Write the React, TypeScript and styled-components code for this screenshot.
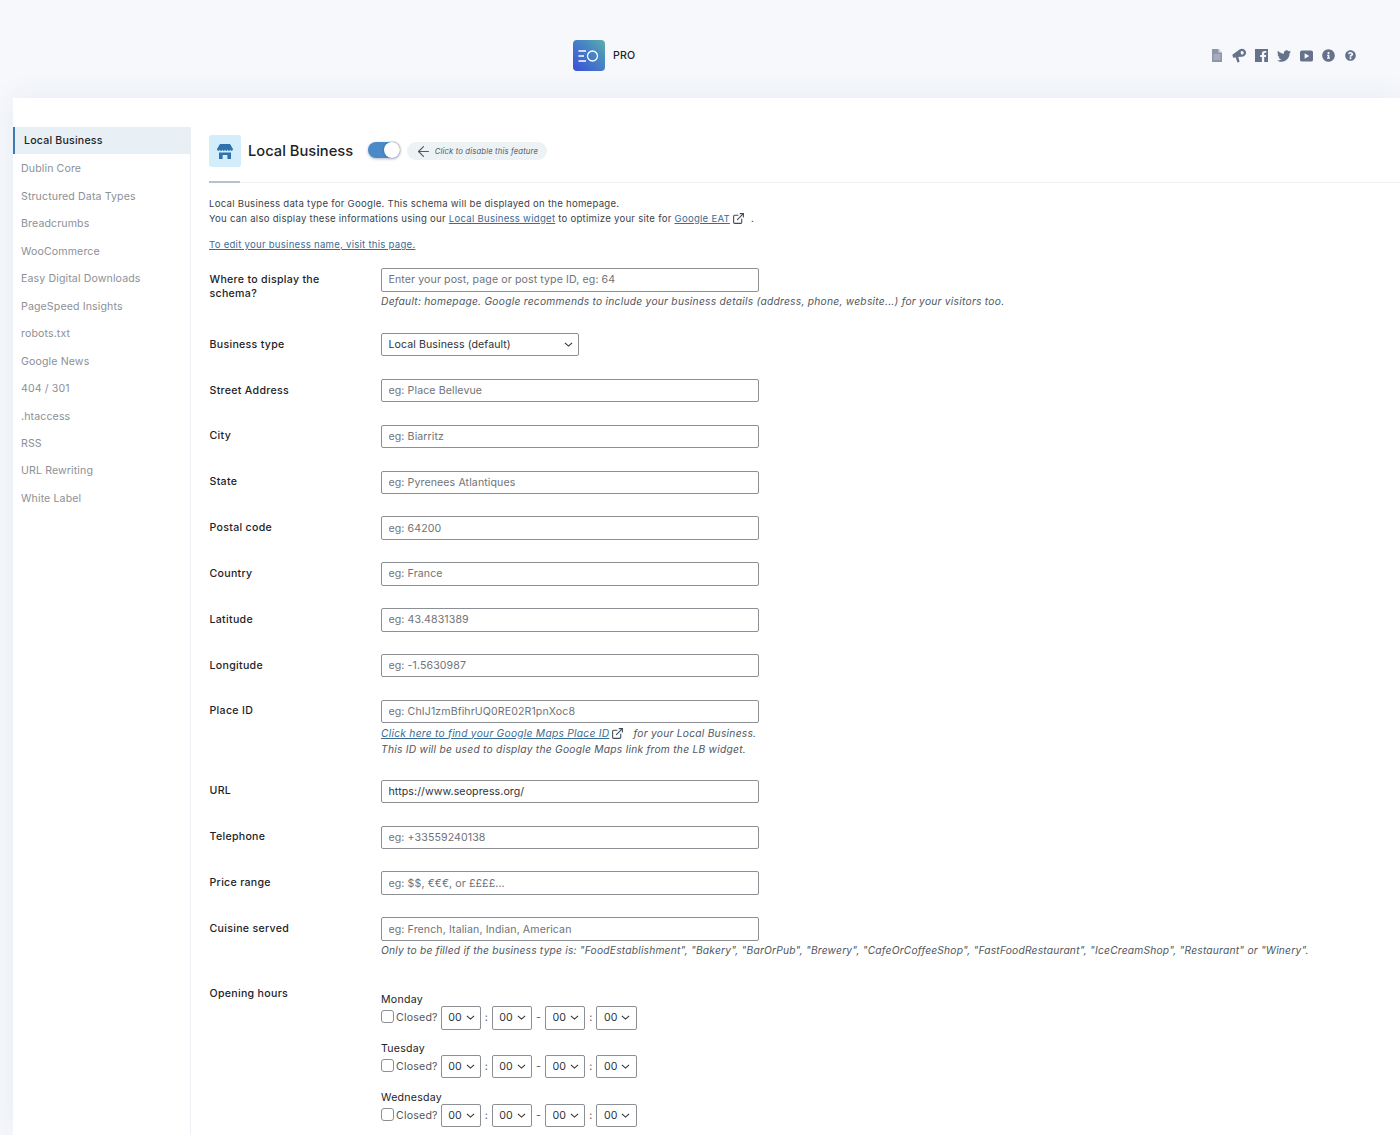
import React from "react";
import styled, { createGlobalStyle } from "styled-components";
import { ArrowLeft, ExternalLink } from "lucide-react";
import { FaTwitter, FaInfoCircle, FaQuestionCircle } from "react-icons/fa";

const chevron =
  "url(\"data:image/svg+xml,%3Csvg xmlns='http://www.w3.org/2000/svg' width='10' height='6' viewBox='0 0 10 6'%3E%3Cpath d='M1 1l4 4 4-4' fill='none' stroke='%23333' stroke-width='1.2'/%3E%3C/svg%3E\")";

const Global = createGlobalStyle`
  html, body { margin: 0; padding: 0; background: #f6f8fc; }
  body { font-family: Inter, "Liberation Sans", sans-serif; font-size: 10.6px; color: #3c434a; height: 1135px; overflow: hidden; }
  * { box-sizing: border-box; }
`;

const Page = styled.div`
  width: 1400px;
  height: 1135px;
  overflow: hidden;
`;

const Header = styled.header`
  height: 98px;
  position: relative;
  display: flex;
  align-items: center;
  justify-content: flex-end;
  padding: 13px 44px 0 0;
`;

const Brand = styled.div`
  position: absolute;
  left: 573px;
  top: 40px;
  display: flex;
  align-items: center;
  gap: 8px;
  font-size: 10.6px;
  font-weight: 500;
  color: #1d2327;
  letter-spacing: 0.2px;
`;

const Logo = styled.div`
  width: 32px;
  height: 31px;
  border-radius: 4px;
  background: linear-gradient(45deg, #3b4fd8 0%, #4b8fbf 70%, #5fb0a8 100%);
  display: flex;
  align-items: center;
  justify-content: center;
`;

const HeaderIcons = styled.nav`
  display: flex;
  align-items: center;
  gap: 9px;
  color: #66728c;
`;

const IconSlot = styled.span<{ $w: number }>`
  width: ${(p) => p.$w}px;
  display: flex;
  justify-content: center;
  align-items: center;
`;

const Panel = styled.main`
  margin-left: 13px;
  height: 1037px;
  background: #fff;
  display: flex;
  box-shadow: 0 0 30px rgba(30, 50, 100, 0.07);
`;

const Sidebar = styled.aside`
  width: 178px;
  flex: none;
  margin-top: 29px;
  border-right: 1px solid #eceff3;
`;

const NavItem = styled.div<{ $active?: boolean }>`
  height: 27.46px;
  line-height: ${(p) => (p.$active ? "27.46px" : "29px")};
  padding-left: ${(p) => (p.$active ? "9px" : "8px")};
  font-size: 10.6px;
  letter-spacing: ${(p) => (p.$active ? "0.2px" : "0.12px")};
  color: ${(p) => (p.$active ? "#1d2327" : "#8d9096")};
  font-weight: ${(p) => (p.$active ? 500 : 400)};
  background: ${(p) => (p.$active ? "#e9f0f5" : "transparent")};
  border-left: ${(p) => (p.$active ? "2px solid #3d7bae" : "none")};
`;

const Content = styled.section`
  flex: 1;
  min-width: 0;
  padding: 37px 0 0 18px;
`;

const TitleBar = styled.div`
  height: 48px;
  display: flex;
  align-items: flex-start;
  border-bottom: 1px solid #eef0f3;
  position: relative;
`;

const TitleUnderline = styled.span`
  position: absolute;
  left: 0;
  bottom: -1px;
  width: 31px;
  height: 2px;
  background: #b4c3d0;
`;

const TitleIcon = styled.div`
  width: 31.5px;
  height: 32px;
  border-radius: 3px;
  background: #d3edfb;
  color: #2f72ad;
  display: flex;
  align-items: center;
  justify-content: center;
  margin-right: 7.5px;
`;

const Title = styled.h1`
  margin: 0 15px 0 0;
  font-size: 14.7px;
  font-weight: 500;
  line-height: 33px;
  color: #1d2327;
`;

const Toggle = styled.span`
  width: 31.5px;
  height: 16px;
  margin-top: 7px;
  border-radius: 8px;
  background: #4a8ac6;
  position: relative;
  box-shadow: 0 1px 3px rgba(30, 60, 110, 0.35);
`;

const Knob = styled.span`
  position: absolute;
  right: 0;
  top: 0;
  width: 16px;
  height: 16px;
  border-radius: 50%;
  background: #fff;
  box-shadow: 0 0 2px rgba(0, 0, 0, 0.4);
`;

const Hint = styled.span`
  margin: 7px 0 0 7px;
  height: 18px;
  padding: 0 8.5px 0 8px;
  border-radius: 9px;
  background: #edf2f4;
  display: flex;
  align-items: center;
  gap: 3px;
  font-size: 7.7px;
  font-style: italic;
  letter-spacing: 0.15px;
  color: #4d5a6b;
`;

const Intro = styled.p`
  margin: 13px 0 0;
  font-size: 9.6px;
  line-height: 15px;
  letter-spacing: 0.25px;
`;

const EditLine = styled.p`
  margin: 11px 0 16px;
  font-size: 9.6px;
  line-height: 15px;
  letter-spacing: 0.25px;
`;

const Link = styled.a`
  color: #3b6c95;
  text-decoration: underline;
`;

const Ext = styled(ExternalLink)`
  width: 13px;
  height: 13px;
  margin-left: 2px;
  vertical-align: -3px;
  color: #3c4a5a;
`;

const Row = styled.div<{ $bottom?: number }>`
  display: flex;
  padding-bottom: ${(p) => p.$bottom ?? 22.35}px;
`;

const Label = styled.div`
  width: 172px;
  flex: none;
  padding-top: 4.7px;
  padding-left: 0.5px;
  padding-right: 30px;
  line-height: 14px;
  font-weight: 500;
  letter-spacing: 0.3px;
  color: #1d2327;
`;

const Field = styled.div<{ $top?: number }>`
  min-width: 0;
  padding-top: ${(p) => p.$top ?? 0}px;
`;

const TextInput = styled.input`
  display: block;
  width: 378px;
  height: 23.5px;
  margin: 0;
  padding: 0 6.5px;
  font: inherit;
  letter-spacing: 0.1px;
  color: #2c3338;
  border: 1px solid #8c8f94;
  border-radius: 2px;
  background: #fff;
  &::placeholder { color: #6f7378; opacity: 1; }
`;

const Select = styled.select<{ $w: number }>`
  display: block;
  appearance: none;
  width: ${(p) => p.$w}px;
  height: 23.5px;
  margin: 0;
  padding: 0 0 0 6.5px;
  font: inherit;
  letter-spacing: 0.08px;
  color: #2c3338;
  border: 1px solid #8c8f94;
  border-radius: 2px;
  background: #fff ${chevron} no-repeat right 5.5px center / 9px auto;
`;

const Desc = styled.p<{ $tight?: boolean }>`
  margin: 1.3px 0 0;
  font-size: 10.25px;
  font-style: italic;
  line-height: 16px;
  letter-spacing: ${(p) => (p.$tight ? "0.2px" : "0.25px")};
  white-space: nowrap;
  color: #50575e;
`;

const Gap = styled.span<{ $w: number }>`
  display: inline-block;
  width: ${(p) => p.$w}px;
`;

const Day = styled.div`
  margin-bottom: 12.4px;
`;

const DayName = styled.div`
  line-height: 13px;
  letter-spacing: 0.25px;
  color: #1d2327;
`;

const TimeRow = styled.div`
  display: flex;
  align-items: center;
  color: #50575e;
  letter-spacing: 0.2px;
`;

const Check = styled.input`
  appearance: none;
  width: 13px;
  height: 13px;
  margin: -2px 2px 0 0;
  border: 1px solid #8c8f94;
  border-radius: 3px;
  background: #fff;
`;

const Sep = styled.span<{ $w: number }>`
  width: ${(p) => p.$w}px;
  text-align: center;
`;

const Closed = styled.span`
  margin-right: 3px;
`;

const navItems = [
  "Local Business", "Dublin Core", "Structured Data Types", "Breadcrumbs", "WooCommerce",
  "Easy Digital Downloads", "PageSpeed Insights", "robots.txt", "Google News", "404 / 301",
  ".htaccess", "RSS", "URL Rewriting", "White Label",
];

const simpleFields: [string, string][] = [
  ["Street Address", "eg: Place Bellevue"],
  ["City", "eg: Biarritz"],
  ["State", "eg: Pyrenees Atlantiques"],
  ["Postal code", "eg: 64200"],
  ["Country", "eg: France"],
  ["Latitude", "eg: 43.4831389"],
  ["Longitude", "eg: -1.5630987"],
];

const TimeSelect = () => (
  <Select $w={40.4} defaultValue="00">
    <option>00</option>
  </Select>
);

const DayBlock = ({ name }: { name: string }) => (
  <Day>
    <DayName>{name}</DayName>
    <TimeRow>
      <Check type="checkbox" />
      <Closed>Closed?</Closed>
      <TimeSelect />
      <Sep $w={10.5}>:</Sep>
      <TimeSelect />
      <Sep $w={13}>-</Sep>
      <TimeSelect />
      <Sep $w={11}>:</Sep>
      <TimeSelect />
    </TimeRow>
  </Day>
);

export default function App() {
  return (
    <Page>
      <Global />
      <Header>
        <Brand>
          <Logo>
            <svg width="22" height="14" viewBox="0 0 22 14" fill="none" stroke="#fff" strokeWidth="1.3">
              <path d="M0.5 2H8M0.5 7H6M0.5 12H8" />
              <circle cx="14.5" cy="7" r="5" />
            </svg>
          </Logo>
          PRO
        </Brand>
        <HeaderIcons>
          <IconSlot $w={12}>
            <svg width="10" height="13" viewBox="0 0 10 13">
              <path fill="#8e97aa" d="M0 0h6.5L10 3.5V13H0z" />
              <path fill="#d5dae3" d="M6.5 0v3.5H10z" />
              <path stroke="#c9ced9" strokeWidth="0.8" d="M1.5 6h7M1.5 8h7M1.5 10h7" />
            </svg>
          </IconSlot>
          <IconSlot $w={14}>
            <svg width="14" height="15" viewBox="0 0 14 15">
              <path fill="currentColor" d="M0.3 6.8 L7.6 1.4 L9.8 8.4 L1.2 9.8 Z" />
              <path fill="currentColor" d="M3.6 9.2 L5.4 14.6 L7.6 13.8 L6.2 8.8 Z" />
              <path fill="currentColor" fillRule="evenodd" d="M10 0.8 a4 4 0 1 1 -.01 0 Z M10 3.1 a1.7 1.7 0 1 0 .01 0 Z" />
            </svg>
          </IconSlot>
          <IconSlot $w={13}>
            <svg width="13" height="13" viewBox="0 0 13 13">
              <path fill="currentColor" d="M0 0h13v13H9.2V8h1.7l.3-2H9.2V4.8c0-.6.3-1 1-1h1.1V2H9.6C7.8 2 6.9 3 6.9 4.6V6H5.2v2h1.7v5H0z" />
            </svg>
          </IconSlot>
          <IconSlot $w={14}><FaTwitter size={14} /></IconSlot>
          <IconSlot $w={13}>
            <svg width="13" height="12" viewBox="0 0 14 12">
              <path fillRule="evenodd" fill="currentColor" d="M2 0h10a2 2 0 0 1 2 2v8a2 2 0 0 1-2 2H2a2 2 0 0 1-2-2V2a2 2 0 0 1 2-2zm3 3v6l5-3z" />
            </svg>
          </IconSlot>
          <IconSlot $w={13}><FaInfoCircle size={13} /></IconSlot>
          <IconSlot $w={12}><FaQuestionCircle size={11} /></IconSlot>
        </HeaderIcons>
      </Header>
      <Panel>
        <Sidebar>
          {navItems.map((n, i) => (
            <NavItem key={n} $active={i === 0}>{n}</NavItem>
          ))}
        </Sidebar>
        <Content>
          <TitleBar>
            <TitleIcon>
              <svg width="16" height="15" viewBox="0 0 16 15" fill="currentColor">
                <path d="M3 0h10l3 5c0 2.2-2.6 2.4-2.7.6C13 7.4 10.8 7.4 10.6 5.6 10.4 7.4 8.2 7.4 8 5.6 7.8 7.4 5.6 7.4 5.4 5.6 5.2 7.4 3 7.4 2.7 5.6 2.6 7.4 0 7.2 0 5z" />
                <path d="M2 8.6h12V15h-3.6v-4H5.6v4H2z" />
              </svg>
            </TitleIcon>
            <Title>Local Business</Title>
            <Toggle><Knob /></Toggle>
            <Hint><ArrowLeft size={17} strokeWidth={1.6} />Click to disable this feature</Hint>
            <TitleUnderline />
          </TitleBar>
          <Intro>
            Local Business data type for Google. This schema will be displayed on the homepage.<br />
            You can also display these informations using our <Link>Local Business widget</Link> to optimize your site for <Link>Google EAT</Link><Ext /> <Gap $w={3} />.
          </Intro>
          <EditLine><Link>To edit your business name, visit this page.</Link></EditLine>

          <Row $bottom={24.2}>
            <Label>Where to display the schema?</Label>
            <Field>
              <TextInput placeholder="Enter your post, page or post type ID, eg: 64" />
              <Desc>Default: homepage. Google recommends to include your business details (address, phone, website...) for your visitors too.</Desc>
            </Field>
          </Row>
          <Row>
            <Label>Business type</Label>
            <Field>
              <Select $w={198} defaultValue="Local Business (default)">
                <option>Local Business (default)</option>
              </Select>
            </Field>
          </Row>
          {simpleFields.map(([l, p]) => (
            <Row key={l}>
              <Label>{l}</Label>
              <Field><TextInput placeholder={p} /></Field>
            </Row>
          ))}
          <Row $bottom={23.2}>
            <Label>Place ID</Label>
            <Field>
              <TextInput placeholder="eg: ChIJ1zmBfihrUQ0RE02R1pnXoc8" />
              <Desc>
                <Link>Click here to find your Google Maps Place ID</Link><Ext /> <Gap $w={6} />for your Local Business.<br />
                This ID will be used to display the Google Maps link from the LB widget.
              </Desc>
            </Field>
          </Row>
          <Row>
            <Label>URL</Label>
            <Field><TextInput defaultValue="https://www.seopress.org/" /></Field>
          </Row>
          <Row>
            <Label>Telephone</Label>
            <Field><TextInput placeholder="eg: +33559240138" /></Field>
          </Row>
          <Row>
            <Label>Price range</Label>
            <Field><TextInput placeholder="eg: $$, €€€, or ££££..." /></Field>
          </Row>
          <Row $bottom={24}>
            <Label>Cuisine served</Label>
            <Field>
              <TextInput placeholder="eg: French, Italian, Indian, American" />
              <Desc $tight>Only to be filled if the business type is: "FoodEstablishment", "Bakery", "BarOrPub", "Brewery", "CafeOrCoffeeShop", "FastFoodRestaurant", "IceCreamShop", "Restaurant" or "Winery".</Desc>
            </Field>
          </Row>
          <Row>
            <Label>Opening hours</Label>
            <Field $top={11}>
              <DayBlock name="Monday" />
              <DayBlock name="Tuesday" />
              <DayBlock name="Wednesday" />
            </Field>
          </Row>
        </Content>
      </Panel>
    </Page>
  );
}
